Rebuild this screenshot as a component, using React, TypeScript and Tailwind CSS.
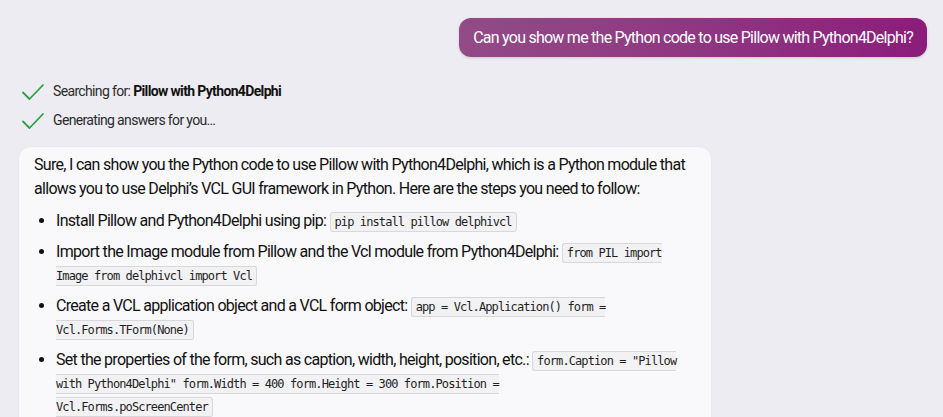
import React from "react";

function Check() {
    return (
        <svg width="24" height="18" viewBox="0 0 24 18" fill="none" className="shrink-0">
            <path d="M2 9.5 L8.5 16 L22 2" stroke="#2ea043" strokeWidth="1.8" strokeLinecap="round" strokeLinejoin="round" />
        </svg>
    );
}

function Code({ children }: { children: React.ReactNode }) {
    return (
        <code className="bg-[#f2f1f4] border border-[#d8d7dc] rounded-[3px] px-[4px] py-[2px] text-[12px] leading-[16px] text-[#1f1f1f] tracking-[-0.9px] [font-family:'DejaVu_Sans_Mono',monospace]">
            {children}
        </code>
    );
}

export default function App() {
    return (
        <div className="w-[943px] h-[417px] overflow-hidden bg-[#edecf2] [font-family:Roboto,'Noto_Sans',sans-serif]">
            {/* user message */}
            <div className="flex justify-end pt-[18px] pr-[16px]">
                <div className="rounded-[12px] px-[14px] py-[8px] text-[16px] leading-[23px] tracking-[-0.75px] text-white bg-gradient-to-r from-[#924b87] to-[#8b1c7b] shadow-[0_1px_3px_rgba(0,0,0,0.15)]">
                    Can you show me the Python code to use Pillow with Python4Delphi?
                </div>
            </div>

            {/* progress steps */}
            <div className="flex flex-col gap-[8px] pl-[21px] pt-[24px] text-[14px] tracking-[-0.65px] text-[#2b2b2b]">
                <div className="flex items-center gap-[8px]">
                    <Check />
                    <span>
                        Searching for: <b className="font-bold text-[#111]">Pillow with Python4Delphi</b>
                    </span>
                </div>
                <div className="flex items-center gap-[8px]">
                    <Check />
                    <span>Generating answers for you…</span>
                </div>
            </div>

            {/* answer card */}
            <div className="mt-[16px] ml-[19px] w-[692px] rounded-[12px] bg-[#f9f8fb] px-[15px] pt-[6px] pb-[16px] text-[16px] leading-[24px] text-[#111] tracking-[-0.7px] shadow-[0_0_2px_rgba(0,0,0,0.05)]">
                <p>
                    Sure, I can show you the Python code to use Pillow with Python4Delphi, which is a Python module that
                    <br />
                    allows you to use Delphi’s VCL GUI framework in Python. Here are the steps you need to follow:
                </p>
                <ul className="mt-[8px] list-disc pl-[22px] flex flex-col gap-[8px] leading-[23px]">
                    <li>
                        Install Pillow and Python4Delphi using pip: <Code>pip install pillow delphivcl</Code>
                    </li>
                    <li>
                        Import the Image module from Pillow and the Vcl module from Python4Delphi:{" "}
                        <Code>
                            from PIL import
                            <br />
                            Image from delphivcl import Vcl
                        </Code>
                    </li>
                    <li>
                        Create a VCL application object and a VCL form object:{" "}
                        <Code>
                            app = Vcl.Application() form =
                            <br />
                            Vcl.Forms.TForm(None)
                        </Code>
                    </li>
                    <li>
                        Set the properties of the form, such as caption, width, height, position, etc.:{" "}
                        <Code>
                            form.Caption = "Pillow
                            <br />
                            with Python4Delphi" form.Width = 400 form.Height = 300 form.Position =
                            <br />
                            Vcl.Forms.poScreenCenter
                        </Code>
                    </li>
                </ul>
            </div>
        </div>
    );
}
